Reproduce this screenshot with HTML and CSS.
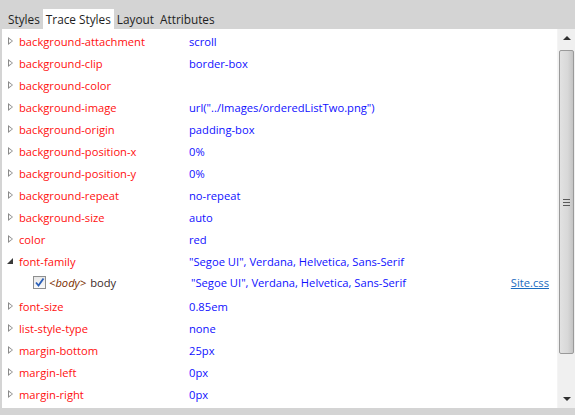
FILE: index.html
```html
<!DOCTYPE html>
<html>
<head>
<meta charset="utf-8">
<link rel="stylesheet" href="styles.css">
</head>
<body>
<div class="tabs">
  <div class="tab">Styles</div>
  <div class="tab active">Trace Styles</div>
  <div class="tab">Layout</div>
  <div class="tab">Attributes</div>
</div>
<div class="panel">
  <div class="list">
    <div class="row"><span class="tri"></span><span class="prop">background-attachment</span><span class="val">scroll</span></div>
    <div class="row"><span class="tri"></span><span class="prop">background-clip</span><span class="val">border-box</span></div>
    <div class="row"><span class="tri"></span><span class="prop">background-color</span><span class="val"></span></div>
    <div class="row"><span class="tri"></span><span class="prop">background-image</span><span class="val">url("../Images/orderedListTwo.png")</span></div>
    <div class="row"><span class="tri"></span><span class="prop">background-origin</span><span class="val">padding-box</span></div>
    <div class="row"><span class="tri"></span><span class="prop">background-position-x</span><span class="val">0%</span></div>
    <div class="row"><span class="tri"></span><span class="prop">background-position-y</span><span class="val">0%</span></div>
    <div class="row"><span class="tri"></span><span class="prop">background-repeat</span><span class="val">no-repeat</span></div>
    <div class="row"><span class="tri"></span><span class="prop">background-size</span><span class="val">auto</span></div>
    <div class="row"><span class="tri"></span><span class="prop">color</span><span class="val">red</span></div>
    <div class="row"><span class="tri open"></span><span class="prop">font-family</span><span class="val">"Segoe UI", Verdana, Helvetica, Sans-Serif</span></div>
    <div class="row sub">
      <span class="sel"><span class="chk"><svg width="13" height="13" viewBox="0 0 13 13"><path d="M3 6.5 L5.5 9.5 L10.5 2.5" fill="none" stroke="#2a5fb8" stroke-width="1.8"/></svg></span><span class="tag">&lt;body&gt;</span> body</span>
      <span class="val">"Segoe UI", Verdana, Helvetica, Sans-Serif</span>
      <a class="src" href="#">Site.css</a>
    </div>
    <div class="row"><span class="tri"></span><span class="prop">font-size</span><span class="val">0.85em</span></div>
    <div class="row"><span class="tri"></span><span class="prop">list-style-type</span><span class="val">none</span></div>
    <div class="row"><span class="tri"></span><span class="prop">margin-bottom</span><span class="val">25px</span></div>
    <div class="row"><span class="tri"></span><span class="prop">margin-left</span><span class="val">0px</span></div>
    <div class="row"><span class="tri"></span><span class="prop">margin-right</span><span class="val">0px</span></div>
  </div>
  <div class="scrollbar">
    <div class="arrow up"></div>
    <div class="track">
      <div class="thumb"><span class="grip"></span></div>
    </div>
    <div class="arrow down"></div>
  </div>
</div>
</body>
</html>
```
FILE: styles.css
```css
html, body {
  margin: 0;
  padding: 0;
}
body {
  background: #d4d4d4;
  font-family: "Open Sans", "Noto Sans", sans-serif;
  font-size: 11.2px;
  color: #1e1e1e;
  width: 575px;
  height: 415px;
  overflow: hidden;
}
.tabs {
  display: flex;
  align-items: flex-end;
  height: 29px;
  padding-left: 5px;
  font-size: 11.8px;
}
.tab {
  height: 20px;
  line-height: 20px;
  padding: 0 3px;
}
.tab.active {
  background: #fff;
}
.panel {
  display: flex;
  height: 379px;
  margin-left: 2px;
  background: #fff;
}
.list {
  flex: 1;
  padding-top: 1px;
}
.row {
  display: flex;
  align-items: center;
  height: 22px;
  white-space: nowrap;
}
.tri {
  width: 0;
  height: 0;
  margin-left: 6px;
  margin-right: 6px;
  border-left: 5px solid #8a8a8a;
  border-top: 4px solid transparent;
  border-bottom: 4px solid transparent;
  position: relative;
}
.tri::after {
  content: "";
  position: absolute;
  left: -4px;
  top: -2px;
  border-left: 3px solid #fff;
  border-top: 2px solid transparent;
  border-bottom: 2px solid transparent;
}
.tri.open {
  border: none;
  width: 0;
  height: 0;
  border-right: 6px solid #3a3a3a;
  border-top: 6px solid transparent;
  margin-left: 5px;
  margin-right: 6px;
}
.tri.open::after {
  display: none;
}
.prop {
  color: #ff1010;
  width: 170px;
}
.val {
  color: #1010ff;
  flex: 1;
}
.row.sub {
  height: 23px;
  padding-bottom: 2px;
  box-sizing: border-box;
}
.sel {
  display: flex;
  align-items: center;
  width: 157px;
  margin-left: 31px;
  color: #3a2a2a;
}
.chk {
  display: inline-block;
  width: 13px;
  height: 13px;
  box-sizing: border-box;
  border: 1px solid #8e8f8f;
  background: linear-gradient(#e8e8e8, #fafafa);
  margin-right: 3px;
}
.chk svg {
  display: block;
  margin: -1px;
}
.tag {
  font-style: italic;
  color: #7a2d00;
  margin-right: 4px;
}
.sub .val {
  padding-left: 1px;
}
.src {
  color: #1a6bc0;
  text-decoration: underline;
  margin-right: 8px;
}
.scrollbar {
  width: 17px;
  display: flex;
  flex-direction: column;
  background: #f0f0f0;
  border-left: 1px solid #f4f4f4;
}
.arrow {
  height: 17px;
  position: relative;
}
.arrow.up::after,
.arrow.down::after {
  content: "";
  position: absolute;
  left: 5px;
  border-left: 4px solid transparent;
  border-right: 4px solid transparent;
}
.arrow.up::after {
  top: 7px;
  border-bottom: 4px solid #303030;
}
.arrow.down::after {
  top: 6px;
  border-top: 4px solid #303030;
}
.track {
  flex: 1;
  padding-top: 4px;
}
.thumb {
  height: 304px;
  margin: 0 1px 0 1px;
  box-sizing: border-box;
  border: 1px solid #9a9a9a;
  border-radius: 2px;
  background: linear-gradient(90deg, #e2e2e2, #d8d8d8 60%, #c4c4c4);
  display: flex;
  align-items: center;
  justify-content: center;
}
.grip {
  width: 7px;
  height: 7px;
  background: repeating-linear-gradient(#5a5a5a 0 1px, transparent 1px 3px);
}
```
